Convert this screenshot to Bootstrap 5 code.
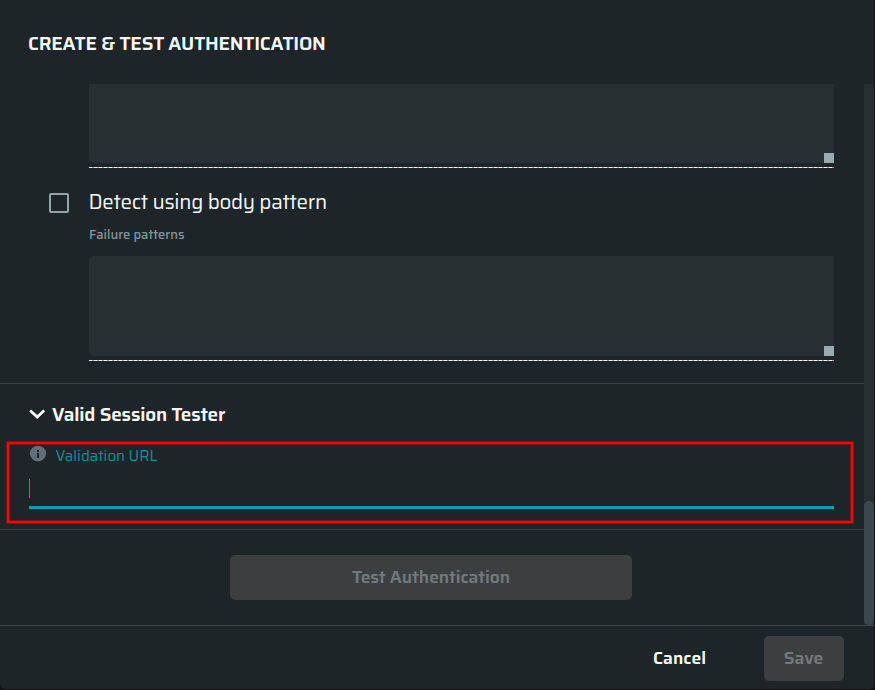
<!DOCTYPE html>
<html lang="en">
<head>
<meta charset="utf-8">
<meta name="viewport" content="width=device-width, initial-scale=1">
<title>Create &amp; Test Authentication</title>
<link rel="stylesheet" href="https://cdn.jsdelivr.net/npm/bootstrap@5.3.0/dist/css/bootstrap.min.css">
<style>
  body { background: #101317; font-family: Saira, Roboto, "Liberation Sans", sans-serif; color: #f7f8f8; }
  .auth-dialog { width: 874px; height: 689px; background: #1e2528; border-radius: 0 0 5px 5px; }
  .auth-head { height: 84px; padding: 2px 0 0 28px; }
  .auth-title { font-size: 19px; font-weight: 600; line-height: 24px; letter-spacing: -.21px; }
  .auth-scroll { height: 541px; }
  .auth-content { width: 864px; }
  .track { width: 10px; background: #282f32; }
  .thumb { height: 124px; background: #3a484e; border-radius: 5px; }
  .field-group { padding-left: 89px; padding-right: 30px; }
  .pattern-box { background: #282f32; height: 100px; border-radius: 5px 0 0 5px; }
  .pattern-box.cut { height: 79px; border-radius: 0 0 0 5px; }
  .grip { width: 10px; height: 10px; background: #9aaab1; }
  .dash-line { height: 1px; margin-top: 4px; background: repeating-linear-gradient(90deg, #fff 0 3px, #a5a8a9 3px 5px); }
  .check-row { height: 24px; margin-top: 23px; padding-left: 49px; }
  .check-box { width: 20px; height: 20px; margin-right: 19.5px; border: 2px solid #92a3ab; border-radius: 2px; }
  .check-label { font-size: 20.5px; font-weight: 450; line-height: 24px; margin-top: -2px; letter-spacing: -.28px; }
  .hint { font-size: 13px; font-weight: 500; line-height: 18px; height: 18px; margin: 11px 0 12px; color: #84949b; }
  .rule { height: 1px; background: #3b4042; }
  .section-rule { margin-top: 22px; }
  .section-head { height: 57px; padding: 2px 0 0 29px; }
  .section-title { font-size: 19px; font-weight: 600; line-height: 24px; margin-left: 7px; letter-spacing: -.2px; }
  .focus-frame { width: 848px; height: 83px; margin-left: 6px; border: 1px solid #791315; }
  .focus-edge { height: 81px; border: 2px solid #f00; }
  .focus-inner { height: 77px; border: 1px solid #791315; padding: 1px 16px 0 19px; }
  .url-label { font-size: 15px; line-height: 20px; color: #118d98; margin: 0 0 1px 8.5px; }
  .caret { width: 1px; height: 19px; background: #069eac; margin-top: 12px; }
  .url-line { height: 3px; background: #069eac; margin-top: 8px; }
  .after-frame { margin-top: 5px; }
  .test-area { height: 95px; padding: 25px 0 0 230px; }
  .btn.muted-btn { background: #3b3f42; color: #73787b; border: 0; border-radius: 5px; opacity: 1; font-size: 17.5px; font-weight: 600; height: 45px; padding: 0; letter-spacing: -.08px; }
  .test-btn { width: 402px; }
  .btn.save-btn { width: 80px; padding-right: 1px; }
  .auth-foot { height: 64px; border-top: 1px solid #43474a; padding: 1px 30px 0 0; }
  .cancel-btn { font-size: 17.5px; font-weight: 600; color: #fff; padding: 0; border: 0; margin-right: 58px; line-height: 24px; }
</style>
<script src="https://cdn.jsdelivr.net/npm/bootstrap@5.3.0/dist/js/bootstrap.bundle.min.js"></script>
</head>
<body class="overflow-hidden">
<div class="auth-dialog overflow-hidden d-flex flex-column">
  <header class="auth-head d-flex align-items-center">
    <h1 class="auth-title m-0">CREATE &amp; TEST AUTHENTICATION</h1>
  </header>
  <main class="auth-scroll d-flex">
    <div class="auth-content">
      <div class="field-group">
        <div class="pattern-box cut d-flex justify-content-end align-items-end"><span class="grip"></span></div>
        <div class="dash-line"></div>
      </div>
      <div class="check-row d-flex align-items-center">
        <span class="check-box" role="checkbox" aria-checked="false"></span>
        <span class="check-label">Detect using body pattern</span>
      </div>
      <div class="field-group">
        <div class="hint">Failure patterns</div>
        <div class="pattern-box d-flex justify-content-end align-items-end"><span class="grip"></span></div>
        <div class="dash-line"></div>
      </div>
      <div class="rule section-rule"></div>
      <div class="section-head d-flex align-items-center">
        <svg width="16" height="10" viewBox="0 0 16 10" fill="none" stroke="#fff" stroke-width="2.8"><path d="M1.2 1.4 8.2 8 15.2 1.4"/></svg>
        <h2 class="section-title mb-0">Valid Session Tester</h2>
      </div>
      <div class="focus-frame"><div class="focus-edge"><div class="focus-inner">
        <div class="d-flex align-items-start">
          <svg width="18" height="16" viewBox="0 0 18 16"><ellipse cx="9" cy="7.6" rx="8.2" ry="7.8" fill="#607079"/><path d="M8 4h2v2H8zM8 7h2v5H8z" fill="#1e2528"/></svg>
          <label class="url-label">Validation URL</label>
        </div>
        <div class="caret"></div>
        <div class="url-line"></div>
      </div></div></div>
      <div class="rule after-frame"></div>
      <div class="test-area"><button class="btn muted-btn test-btn" disabled>Test Authentication</button></div>
    </div>
    <div class="track d-flex flex-column justify-content-end"><div class="thumb"></div></div>
  </main>
  <footer class="auth-foot d-flex justify-content-end align-items-center">
    <button class="btn cancel-btn">Cancel</button>
    <button class="btn muted-btn save-btn" disabled>Save</button>
  </footer>
</div>
</body>
</html>
